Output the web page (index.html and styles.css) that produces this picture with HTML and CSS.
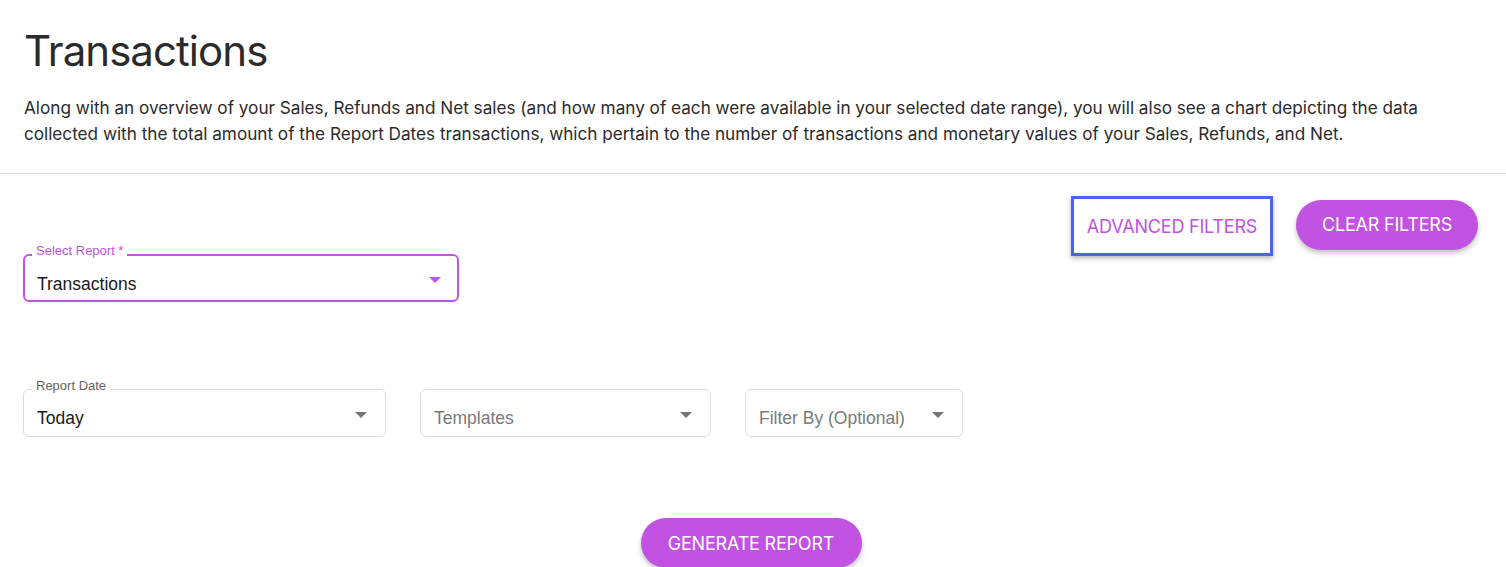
FILE: index.html
```html
<!DOCTYPE html>
<html>
<head>
<meta charset="utf-8">
<link rel="stylesheet" href="styles.css">
</head>
<body>
<div class="page">
  <header class="intro">
    <h1 class="title">Transactions</h1>
    <p class="desc">Along with an overview of your Sales, Refunds and Net sales (and how many of each were available in your selected date range), you will also see a chart depicting the data collected with the total amount of the Report Dates transactions, which pertain to the number of transactions and monetary values of your Sales, Refunds, and Net.</p>
  </header>
  <section class="form">
    <div class="actions">
      <button class="btn-text">ADVANCED FILTERS</button>
      <button class="btn-pill">CLEAR FILTERS</button>
    </div>
    <div class="row row-report">
      <div class="field field-focus w-report">
        <span class="label">Select Report *</span>
        <span class="value">Transactions</span>
        <span class="caret"></span>
      </div>
    </div>
    <div class="row row-filters">
      <div class="field w-date">
        <span class="label label-grey">Report Date</span>
        <span class="value">Today</span>
        <span class="caret"></span>
      </div>
      <div class="field w-tpl">
        <span class="value placeholder">Templates</span>
        <span class="caret"></span>
      </div>
      <div class="field w-filter">
        <span class="value placeholder">Filter By (Optional)</span>
        <span class="caret"></span>
      </div>
    </div>
    <div class="generate">
      <button class="btn-pill btn-gen">GENERATE REPORT</button>
    </div>
  </section>
</div>
</body>
</html>
```

FILE: styles.css
```css
* { box-sizing: border-box; }
html, body { margin: 0; padding: 0; background: #fff; }
body { font-family: Inter, "Noto Sans", sans-serif; color: #2b2b2b; overflow: hidden; }

.intro { padding: 27px 24px 0 24px; border-bottom: 1px solid #dcdcdc; height: 174px; }
.title { margin: 0; font-size: 42px; font-weight: 400; line-height: 48px; letter-spacing: -0.95px; color: #2a2a2a; }
.desc { margin: 20px 0 0 0; font-size: 17.2px; line-height: 26px; color: #2b2b2b; max-width: 1420px; letter-spacing: -0.02px; }

.form { padding: 0 23px; }
.actions { display: flex; justify-content: flex-end; align-items: center; gap: 23px; padding-top: 22px; padding-right: 5px; }
.btn-text {
  font-family: Inter, "Noto Sans", sans-serif; font-size: 18px; color: #c152e1; background: #fff;
  border: 3px solid #4a63f0; height: 60px; width: 202px; padding: 0; letter-spacing: -0.2px;
  box-shadow: 0 2px 5px rgba(0,0,0,0.3);
}
.btn-pill {
  font-family: Inter, "Noto Sans", sans-serif; font-size: 18px; color: #fff; background: #c252e2;
  border: none; border-radius: 25px; height: 50px; width: 182px; padding: 0; letter-spacing: -0.2px;
  box-shadow: 0 3px 5px rgba(0,0,0,0.25);
}
.actions .btn-pill { margin-top: -3px; }

.row { display: flex; gap: 34px; }
.row-report { margin-top: -2px; }
.row-filters { margin-top: 87px; }

.field {
  position: relative; height: 48px; border: 1px solid #dcdcdc; border-radius: 6px;
  display: flex; align-items: center; padding: 0 13px;
  font-family: "Liberation Sans", Arial, sans-serif;
}
.field-focus { border: 2px solid #c252e2; padding: 0 12px; }
.w-report { width: 436px; }
.w-date { width: 363px; }
.w-tpl { width: 291px; }
.w-filter { width: 218px; }

.label {
  position: absolute; top: -12px; left: 8px; background: #fff; padding: 0 4px;
  font-size: 13px; line-height: 16px; color: #c252e2;
}
.field-focus .label { left: 7px; top: -13px; }
.label-grey { color: #666; }
.value { font-size: 17.5px; color: #1a1a1a; flex: 1; padding-top: 13px; }
.field:not(.field-focus) .value { padding-top: 11px; }
.placeholder { color: #7a7a7a; }
.caret {
  width: 0; height: 0; border-left: 6px solid transparent; border-right: 6px solid transparent;
  border-top: 6px solid #757575; margin-right: 5px; margin-top: 4px;
}
.field-focus .caret { border-top-color: #c252e2; margin-right: 4px; }

.generate { display: flex; justify-content: center; margin-top: 81px; padding-right: 4px; }
.btn-gen { width: 221px; height: 50px; }
```
